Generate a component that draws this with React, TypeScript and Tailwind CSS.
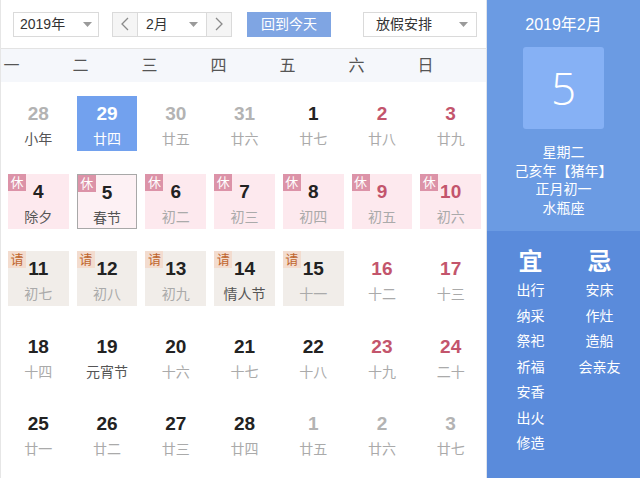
import React from 'react';

type Day = {
  n: number;
  lunar: string;
  tone?: 'gray' | 'red';
  fest?: boolean;
  tag?: 'rest' | 'leave';
  today?: boolean;
  selected?: boolean;
};

const weeks: Day[][] = [
  [
    { n: 28, lunar: '小年', tone: 'gray', fest: true },
    { n: 29, lunar: '廿四', today: true },
    { n: 30, lunar: '廿五', tone: 'gray' },
    { n: 31, lunar: '廿六', tone: 'gray' },
    { n: 1, lunar: '廿七' },
    { n: 2, lunar: '廿八', tone: 'red' },
    { n: 3, lunar: '廿九', tone: 'red' },
  ],
  [
    { n: 4, lunar: '除夕', tag: 'rest', fest: true },
    { n: 5, lunar: '春节', tag: 'rest', fest: true, selected: true },
    { n: 6, lunar: '初二', tag: 'rest' },
    { n: 7, lunar: '初三', tag: 'rest' },
    { n: 8, lunar: '初四', tag: 'rest' },
    { n: 9, lunar: '初五', tag: 'rest', tone: 'red' },
    { n: 10, lunar: '初六', tag: 'rest', tone: 'red' },
  ],
  [
    { n: 11, lunar: '初七', tag: 'leave' },
    { n: 12, lunar: '初八', tag: 'leave' },
    { n: 13, lunar: '初九', tag: 'leave' },
    { n: 14, lunar: '情人节', tag: 'leave', fest: true },
    { n: 15, lunar: '十一', tag: 'leave' },
    { n: 16, lunar: '十二', tone: 'red' },
    { n: 17, lunar: '十三', tone: 'red' },
  ],
  [
    { n: 18, lunar: '十四' },
    { n: 19, lunar: '元宵节', fest: true },
    { n: 20, lunar: '十六' },
    { n: 21, lunar: '十七' },
    { n: 22, lunar: '十八' },
    { n: 23, lunar: '十九', tone: 'red' },
    { n: 24, lunar: '二十', tone: 'red' },
  ],
  [
    { n: 25, lunar: '廿一' },
    { n: 26, lunar: '廿二' },
    { n: 27, lunar: '廿三' },
    { n: 28, lunar: '廿四' },
    { n: 1, lunar: '廿五', tone: 'gray' },
    { n: 2, lunar: '廿六', tone: 'gray' },
    { n: 3, lunar: '廿七', tone: 'gray' },
  ],
];

const weekdays = ['一', '二', '三', '四', '五', '六', '日'];
const good = ['出行', '纳采', '祭祀', '祈福', '安香', '出火', '修造'];
const bad = ['安床', '作灶', '造船', '会亲友'];

const Caret = () => (
  <svg width="9" height="5" viewBox="0 0 9 5" className="shrink-0">
    <path d="M0 0h9L4.5 5z" fill="#9a9a9a" />
  </svg>
);

const Chevron = ({ dir }: { dir: 'l' | 'r' }) => (
  <svg width="8" height="14" viewBox="0 0 8 14">
    <path
      d={dir === 'l' ? 'M7 1L1 7l6 6' : 'M1 1l6 6-6 6'}
      fill="none"
      stroke="#8a8a8a"
      strokeWidth="1.3"
    />
  </svg>
);

function Cell({ d }: { d: Day }) {
  let bg = 'bg-transparent';
  if (d.tag === 'rest') bg = d.selected ? 'bg-[#fdf1f4] border border-[#a8a8a8]' : 'bg-[#fde9ee]';
  if (d.tag === 'leave') bg = 'bg-[#f1ede9]';
  if (d.today) bg = 'bg-[#72a1ee]';

  let num = 'text-[#222]';
  if (d.tone === 'gray') num = 'text-[#b3b3b3]';
  if (d.tone === 'red') num = 'text-[#c3556c]';
  if (d.today) num = 'text-white';

  let lun = d.fest ? 'text-[#555]' : 'text-[#aaa]';
  if (d.today) lun = 'text-white';

  return (
    <div className={`relative h-[55px] flex flex-col items-center pt-[6px] ${bg}`}>
      {d.tag === 'rest' && (
        <span className="absolute top-0 left-0 w-[18px] h-[17px] bg-[#dc93a8] text-white text-[13px] leading-[17px] text-center">
          休
        </span>
      )}
      {d.tag === 'leave' && (
        <span className="absolute top-0 left-0 w-[18px] h-[17px] bg-[#f3dccf] text-[#c0652e] text-[13px] leading-[17px] text-center">
          请
        </span>
      )}
      <span
        className={`text-[19px] font-bold leading-[24px] ${num}`}
        style={{ fontFamily: '"Liberation Sans", Arial, sans-serif' }}
      >
        {d.n}
      </span>
      <span className={`text-[14px] leading-[20px] mt-[3px] ${lun}`}>{d.lunar}</span>
    </div>
  );
}

export default function App() {
  return (
    <div
      className="flex w-[640px] h-[478px] overflow-hidden bg-white"
      style={{ fontFamily: '"Liberation Sans", "Noto Sans CJK SC", sans-serif' }}
    >
      <div className="w-[487px] shrink-0 flex flex-col border-l border-[#e6e6e6] border-r border-r-[#dfe4ec]">
        <div className="h-[49px] shrink-0 flex items-center border-b border-[#e3e3e3] pl-[12px]">
          <div className="w-[86px] h-[25px] border border-[#dadada] flex items-center justify-between pl-[6px] pr-[6px] text-[14px] text-[#333]">
            2019年
            <Caret />
          </div>
          <div className="ml-[13px] flex h-[25px] border border-[#dadada]">
            <div className="w-[25px] bg-[#f5f5f5] flex items-center justify-center border-r border-[#dadada]">
              <Chevron dir="l" />
            </div>
            <div className="w-[68px] flex items-center justify-between pl-[8px] pr-[8px] text-[14px] text-[#333]">
              2月
              <Caret />
            </div>
            <div className="w-[25px] bg-[#f5f5f5] flex items-center justify-center border-l border-[#dadada]">
              <Chevron dir="r" />
            </div>
          </div>
          <div className="ml-[15px] w-[84px] h-[25px] bg-[#7fa5e3] text-white text-[14px] flex items-center justify-center">
            回到今天
          </div>
          <div className="ml-[32px] w-[114px] h-[25px] border border-[#dadada] flex items-center justify-between pl-[12px] pr-[8px] text-[14px] text-[#333]">
            放假安排
            <Caret />
          </div>
        </div>
        <div className="h-[33px] shrink-0 bg-[#f5f7fb] overflow-hidden">
          <div className="ml-[-24px] w-[483px] grid grid-cols-7 h-full items-center text-[16px] text-[#555]">
            {weekdays.map((w) => (
              <span key={w} className="text-center">
                {w}
              </span>
            ))}
          </div>
        </div>
        <div className="pt-[14px] pl-[7px] pr-[5px] grid grid-cols-7 gap-x-[8px] gap-y-[22.5px]">
          {weeks.flat().map((d, i) => (
            <Cell key={i} d={d} />
          ))}
        </div>
      </div>

      <div className="flex-1 flex flex-col text-white">
        <div className="h-[231px] shrink-0 bg-[#6b9be3] flex flex-col items-center pt-[14px]">
          <div className="text-[16px] leading-[22px]">2019年2月</div>
          <div
            className="mt-[11px] w-[81px] h-[82px] rounded-[3px] bg-[#86b1f5] flex items-center justify-center text-[44px] font-light"
            style={{ fontFamily: '"Open Sans", "Noto Sans", sans-serif' }}
          >
            5
          </div>
          <div className="mt-[14px] flex flex-col items-center text-[14px] leading-[18.5px]">
            <span>星期二</span>
            <span>己亥年【猪年】</span>
            <span>正月初一</span>
            <span>水瓶座</span>
          </div>
        </div>
        <div className="flex-1 bg-[#5a8bdb] pt-[17px] pl-[9px]">
          <div className="w-[138px] grid grid-cols-2">
            <div className="flex flex-col items-center">
              <span className="text-[24px] font-bold leading-[28px]">宜</span>
              <div className="mt-[2px] flex flex-col items-center text-[14px] leading-[25.5px]">
                {good.map((g) => (
                  <span key={g}>{g}</span>
                ))}
              </div>
            </div>
            <div className="flex flex-col items-center">
              <span className="text-[24px] font-bold leading-[28px]">忌</span>
              <div className="mt-[2px] flex flex-col items-center text-[14px] leading-[25.5px]">
                {bad.map((g) => (
                  <span key={g}>{g}</span>
                ))}
              </div>
            </div>
          </div>
        </div>
      </div>
    </div>
  );
}
